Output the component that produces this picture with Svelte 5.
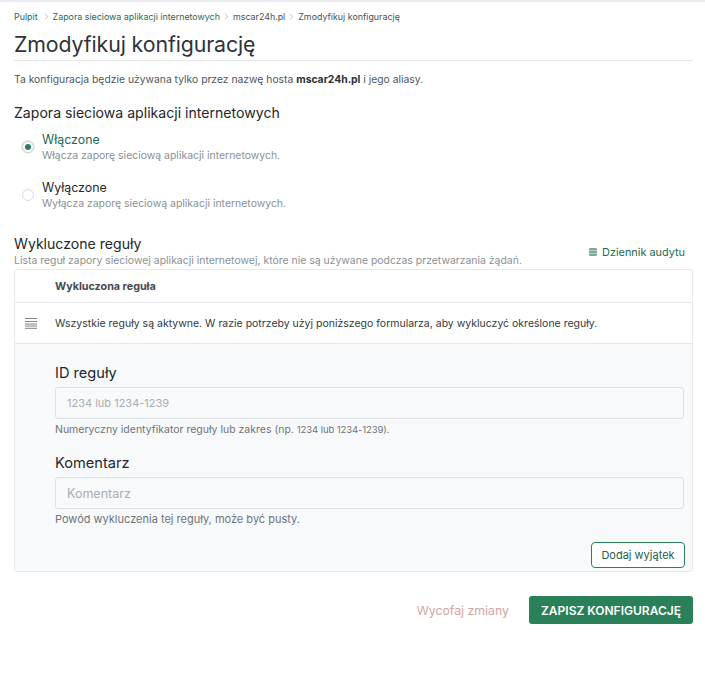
<script>
  const crumbs = [
    { t: 'Pulpit', c: 'link' },
    { t: 'Zapora sieciowa aplikacji internetowych', c: 'link' },
    { t: 'mscar24h.pl', c: 'plain' },
    { t: 'Zmodyfikuj konfigurację', c: 'plain' }
  ];
</script>

<div class="topline"></div>
<div class="page">
  <nav class="crumbs">
    {#each crumbs as c, i}
      {#if i > 0}
        <svg class="chev" width="5" height="7" viewBox="0 0 5 7"><path d="M1 .8 3.800 3.500 1 6.200" fill="none" stroke="#b9bec4" stroke-width=".9"/></svg>
      {/if}
      <span class={c.c}>{c.t}</span>
    {/each}
  </nav>
  <h1>Zmodyfikuj konfigurację</h1>
  <p class="intro">Ta konfiguracja będzie używana tylko przez nazwę hosta <b>mscar24h.pl</b> i jego aliasy.</p>

  <h2>Zapora sieciowa aplikacji internetowych</h2>
  <div class="radios">
    <div class="radio">
      <span class="dot on"><i></i></span>
      <div>
        <div class="rt green">Włączone</div>
        <div class="rd">Włącza zaporę sieciową aplikacji internetowych.</div>
      </div>
    </div>
    <div class="radio">
      <span class="dot"></span>
      <div>
        <div class="rt">Wyłączone</div>
        <div class="rd">Wyłącza zaporę sieciową aplikacji internetowych.</div>
      </div>
    </div>
  </div>

  <div class="sechead">
    <div>
      <h3>Wykluczone reguły</h3>
      <div class="secdesc">Lista reguł zapory sieciowej aplikacji internetowej, które nie są używane podczas przetwarzania żądań.</div>
    </div>
    <div class="audit">
      <svg width="8" height="8" viewBox="0 0 8 8"><path d="M0 1.200C0 .5.6 0 1.200 0h5.600C7.400 0 8 .5 8 1.200V2.400H0zM0 2.900h8v2.200H0zM0 5.600h8v1.200C8 7.500 7.400 8 6.800 8H1.200C.6 8 0 7.500 0 6.800z" fill="#7fa892"/></svg>
      <span>Dziennik audytu</span>
    </div>
  </div>

  <div class="card">
    <div class="thead">Wykluczona reguła</div>
    <div class="trow">
      <svg class="list" width="12" height="11" viewBox="0 0 12 11"><path d="M0 .5h12M0 3.500h12M0 6h12M0 8h12M0 10.300h12" stroke="#7c8187" stroke-width="1" fill="none"/></svg>
      <span>Wszystkie reguły są aktywne. W razie potrzeby użyj poniższego formularza, aby wykluczyć określone reguły.</span>
    </div>
    <div class="form">
      <label for="rid">ID reguły</label>
      <input id="rid" class="num" placeholder="1234 lub 1234-1239" />
      <div class="help">Numeryczny identyfikator reguły lub zakres (np. <span class="digits">1234 lub 1234-1239).</span></div>
      <label class="second" for="kom">Komentarz</label>
      <input id="kom" placeholder="Komentarz" />
      <div class="help wide">Powód wykluczenia tej reguły, może być pusty.</div>
      <div class="addrow"><button class="add">Dodaj wyjątek</button></div>
    </div>
  </div>

  <div class="footer">
    <span class="undo">Wycofaj zmiany</span>
    <button class="save">ZAPISZ KONFIGURACJĘ</button>
  </div>
</div>

<style>
  :global(body) {
    margin: 0;
    background: #fff;
    font-family: Inter, "Noto Sans", "Liberation Sans", sans-serif;
    color: #33383d;
  }
  .topline { height: 2px; background: #e9ebee; }
  .page { padding: 0 12px 0 14px; }
  .crumbs {
    display: flex; align-items: center; gap: 3px;
    height: 14px; margin-top: 7px;
    font-size: 8.900px; white-space: nowrap;
  }
  .link { color: #1f6b57; }
  .link:first-child { margin-right: 2px; }
  .plain { color: #4a5056; }
  .chev { margin: 0 1px; }
  h1 {
    margin: 7px 0 0; padding-bottom: 1px;
    font-size: 21.300px; letter-spacing: -.1px; line-height: 29px; font-weight: 400;
    color: #2f3338; border-bottom: 1px solid #e4e6e9;
  }
  .intro { margin: 11px 0 0; font-size: 10.350px; line-height: 15px; color: #50565c; }
  .intro b { color: #2b2f33; font-weight: 700; }
  h2 { margin: 17px 0 0; font-size: 14.100px; line-height: 18px; font-weight: 400; color: #23272b; }
  .radios { margin-top: 10px; display: flex; flex-direction: column; gap: 17px; }
  .radio { display: flex; gap: 8px; padding-left: 8px; height: 31px; }
  .dot {
    box-sizing: border-box; flex: none; width: 12px; height: 12px; margin-top: 9px;
    border-radius: 50%; border: 1px solid #d9dcdf; background: #fff;
    display: flex; align-items: center; justify-content: center;
  }
  .dot.on { border-color: #c9d8d0; box-shadow: 0 0 0 1px #e6eeea; }
  .dot i { width: 6px; height: 6px; border-radius: 50%; background: #2a8159; }
  .rt { font-size: 12.400px; line-height: 16px; color: #262a2e; }
  .rt.green { color: #1c6a55; }
  .rd { font-size: 10.440px; line-height: 15px; color: #8b9096; }
  .sechead { display: flex; justify-content: space-between; align-items: flex-end; margin-top: 22px; }
  h3 { margin: 0; font-size: 14.100px; line-height: 21px; font-weight: 400; color: #23272b; }
  .secdesc { font-size: 10.440px; line-height: 14px; color: #8b9096; }
  .audit { display: flex; align-items: center; gap: 5px; margin: 0 8px 9px 0; font-size: 10.900px; line-height: 14px; color: #1c6a55; }
  .card { margin-top: 1px; border: 1px solid #e7e9ec; border-radius: 3px; overflow: hidden; }
  .thead {
    height: 32px; padding-left: 40px; display: flex; align-items: center;
    font-size: 10.750px; font-weight: 700; color: #454a50; border-bottom: 1px solid #e7e9ec;
  }
  .trow {
    height: 40px; padding-left: 10px; display: flex; align-items: center; gap: 18px;
    font-size: 10.500px; color: #33383d; border-bottom: 1px solid #e7e9ec;
  }
  .list { flex: none; }
  .form { background: #f8f9fb; padding: 20px 8px 3px 40px; display: flex; flex-direction: column; }
  label { font-size: 14.600px; line-height: 18px; color: #23272b; }
  label.second { margin-top: 17px; }
  input {
    box-sizing: border-box; width: 100%; height: 32px; margin-top: 5px; padding: 0 11px;
    border: 1px solid #dfe2e5; border-radius: 3px; background: #f8f9fb;
    font: inherit; font-size: 12.500px; color: #33383d; outline: none;
  }
  input.num { font-size: 11px; }
  input::placeholder { color: #a9adb2; opacity: 1; }
  .help { margin-top: 3px; font-size: 10.500px; line-height: 15px; color: #6e7379; }
  .help.wide { font-size: 11px; }
  .digits { font-size: 9.500px; letter-spacing: -.1px; }
  .addrow { display: flex; justify-content: flex-end; margin: 15px -1px 0 0; }
  .add {
    width: 94px; height: 26px; padding: 0;
    border: 1px solid #2a8159; border-radius: 4px; background: #fff;
    font: inherit; font-size: 11px; color: #1f5f50;
  }
  .footer { display: flex; justify-content: flex-end; align-items: center; gap: 20px; margin-top: 24px; }
  .undo { font-size: 12.300px; color: #d3a59d; }
  .save {
    width: 164px; height: 28px; padding: 0;
    border: 0; border-radius: 3px; background: #2a8159; color: #fff;
    font: inherit; font-size: 12px; font-weight: 600;
  }
</style>
